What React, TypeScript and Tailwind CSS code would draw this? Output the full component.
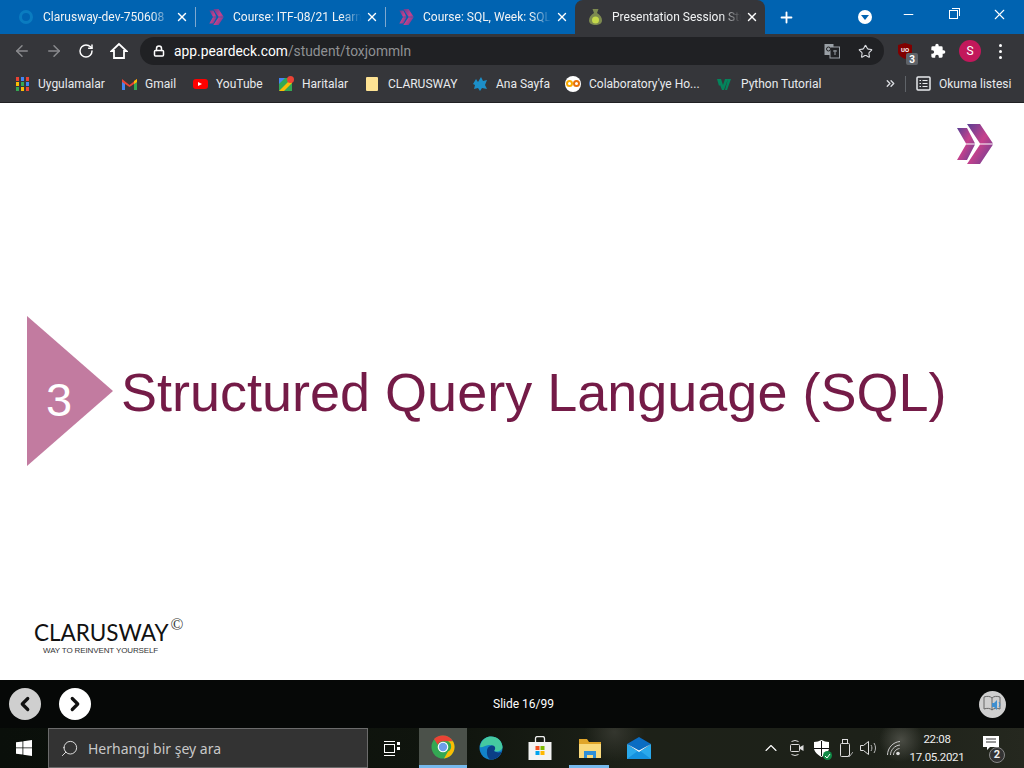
import { ArrowLeft, ArrowRight, RotateCw, Star, X, Plus, Minus, Lock, Search, ChevronUp, ChevronsRight, ChevronLeft, ChevronRight } from 'lucide-react'

const font = '[font-family:Roboto,"Open_Sans",sans-serif]'

function ClaruswayMark({ width = 16, height = 16 }: { width?: number; height?: number }) {
  return (
    <svg width={width} height={height} viewBox="0 0 36 40">
      <defs>
        <linearGradient id="cw" x1="0" y1="0" x2="1" y2="1">
          <stop offset="0" stopColor="#5b3f94" />
          <stop offset="0.5" stopColor="#c6418c" />
          <stop offset="1" stopColor="#5b3f94" />
        </linearGradient>
      </defs>
      <path d="M0 4h10l8 15.500H9z M9 20.500h9L10 36H0z" fill="url(#cw)" />
      <path d="M10 0h13l13 19.500H23z M23 20.500h13L23 40H10z" fill="url(#cw)" />
    </svg>
  )
}

function Tab({ title, icon, active }: { title: string; icon: React.ReactNode; active?: boolean }) {
  return (
    <div className={`flex h-[34px] shrink-0 items-center pl-[12px] pr-[6px] ${active ? 'w-[190px] rounded-t-lg bg-[#35363a]' : 'w-[189px]'}`}>
      <div className="flex h-4 w-4 shrink-0 items-center justify-center">{icon}</div>
      <span className="ml-[9px] min-w-0 flex-1 overflow-hidden whitespace-nowrap text-[12px] text-[#f1f3f4] [mask-image:linear-gradient(to_right,black_85%,transparent)]">
        {title}
      </span>
      <X size={14} strokeWidth={2.4} className="ml-[4px] shrink-0 text-white" />
    </div>
  )
}

function Bookmark({ icon, label, className }: { icon: React.ReactNode; label: string; className: string }) {
  return (
    <div className={`flex items-center gap-[8px] text-[12px] text-[#e8eaed] ${className}`}>
      <div className="flex h-4 w-4 shrink-0 items-center justify-center">{icon}</div>
      <span className="whitespace-nowrap">{label}</span>
    </div>
  )
}

function AppsIcon() {
  const colors = ['#ea4335', '#4285f4', '#ea4335', '#fbbc04', '#34a853', '#4285f4', '#34a853', '#fbbc04', '#ea4335']
  return (
    <div className="grid grid-cols-3 gap-x-[2px] gap-y-[1px]">
      {colors.map((c, i) => (
        <div key={i} className="h-[4px] w-[3px]" style={{ background: c }} />
      ))}
    </div>
  )
}

function ChromeIcon() {
  return (
    <svg width="24" height="24" viewBox="0 0 24 24">
      <circle cx="12" cy="12" r="11.500" fill="#34a853" />
      <path d="M12 .5a11.500 11.500 0 0 1 10 5.800H12a5.700 5.700 0 0 0-5.200 3.400L3 4A11.500 11.500 0 0 1 12 .5z" fill="#ea4335" />
      <path d="M22 6.300a11.500 11.500 0 0 1-9 17.200l4-7a5.700 5.700 0 0 0 0-10.200z" fill="#fbbc04" />
      <circle cx="12" cy="12" r="5.300" fill="#fff" />
      <circle cx="12" cy="12" r="4.200" fill="#6d9eeb" />
    </svg>
  )
}

function EdgeIcon() {
  return (
    <svg width="24" height="24" viewBox="0 0 24 24">
      <circle cx="12" cy="12" r="11.500" fill="#1283c9" />
      <path d="M1 11C2 3 8 .5 12 .5c6 0 11 4 11.500 10.500.2 3.500-5 5.500-8.500 4 2-3-1-6.500-5-6C6 9.500 3 12 1 11z" fill="#45c9a0" />
      <path d="M8 15c0-4 4-6.500 7-5 2 1.500 1 4 0 5 3 2 5.500 1.500 8 .5-2 5-6 8-11 8-3-.5-4.500-5-4-8.500z" fill="#0b3f86" />
    </svg>
  )
}

function StoreIcon() {
  return (
    <svg width="24" height="24" viewBox="0 0 24 24">
      <path d="M7.500 7V2.500C7.500 1 8.500.5 9.500.5h5c1 0 2 .5 2 2V7" fill="none" stroke="#eee" strokeWidth="1.300" />
      <rect x="0.500" y="6" width="23" height="18" fill="#f3f3f3" />
      <rect x="7.500" y="10" width="4" height="4" fill="#f25022" />
      <rect x="12.500" y="10" width="4" height="4" fill="#7fba00" />
      <rect x="7.500" y="15" width="4" height="4" fill="#00a4ef" />
      <rect x="12.500" y="15" width="4" height="4" fill="#ffb900" />
    </svg>
  )
}

function ExplorerIcon() {
  return (
    <svg width="22" height="19" viewBox="0 0 22 19">
      <path d="M0 0h8l2 3h12v16H0z" fill="#e0a52a" />
      <path d="M0 5h22v14H0z" fill="#f9d97c" />
      <path d="M5 19v-7h12v7h-3v-3H8v3z" fill="#2f8fd8" />
    </svg>
  )
}

function MailIcon() {
  return (
    <svg width="24" height="22" viewBox="0 0 24 22">
      <path d="M0 7 12 0l12 7-12 8z" fill="#0a6cc2" />
      <path d="M0 7l12 8 12-8v15H0z" fill="#2aa9ec" />
      <path d="M0 22l12-9 12 9z" fill="#1591de" />
      <path d="M0 7l12 8 12-8-12 6.500z" fill="#fff" />
    </svg>
  )
}

export default function App() {
  return (
    <div className={`flex h-[768px] w-[1024px] flex-col overflow-hidden bg-white ${font}`}>
      {/* tab strip */}
      <div className="flex h-[34px] items-center bg-[#0063b1] pl-[6px]">
        <Tab title="Clarusway-dev-750608" icon={<div className="h-[14px] w-[14px] rounded-full border-[3px] border-[#0a7cc0]" />} />
        <div className="h-5 w-px bg-[#7fa8cf]" />
        <Tab title="Course: ITF-08/21 Learn" icon={<ClaruswayMark width={15} height={16} />} />
        <div className="h-5 w-px bg-[#7fa8cf]" />
        <Tab title="Course: SQL, Week: SQL" icon={<ClaruswayMark width={15} height={16} />} />
        <Tab
          active
          title="Presentation Session Stu"
          icon={
            <svg width="13" height="16" viewBox="0 0 13 16">
              <path d="M3.500 0h6L8 4c3 1.500 5 4.500 5 7.500 0 3-3 4.500-6.500 4.500S0 14.500 0 11.500C0 8.500 2 5.500 5 4z" fill="#7d8a50" />
              <circle cx="6.500" cy="11" r="3.500" fill="#c5d94a" />
            </svg>
          }
        />
        <Plus size={17} strokeWidth={2.6} className="ml-[13px] text-white" />
        <div className="ml-[63px] flex h-[14px] w-[14px] items-center justify-center rounded-full bg-white">
          <div className="h-0 w-0 border-x-[4px] border-t-[5px] border-x-transparent border-t-[#0063b1]" />
        </div>
        <Minus size={15} strokeWidth={1.700} className="mb-[6px] ml-[29px] text-white" />
        <div className="relative mb-[6px] ml-[33px] h-[9px] w-[9px] border border-white">
          <div className="absolute -right-[3px] -top-[3px] h-[8px] w-[8px] border-r border-t border-white" />
        </div>
        <X size={17} strokeWidth={1.500} className="mb-[6px] ml-[33px] text-white" />
      </div>

      {/* toolbar */}
      <div className="flex h-[34px] items-center bg-[#35363a] pl-[13px]">
        <ArrowLeft size={18} className="text-[#8a8b8e]" />
        <ArrowRight size={18} className="ml-[14px] text-[#8a8b8e]" />
        <RotateCw size={16} strokeWidth={2.2} className="ml-[15px] text-white" />
        <svg width="18" height="18" viewBox="0 0 18 18" className="ml-[16px]">
          <path d="M9 2 1.500 9H4v7h10V9h2.500z" fill="none" stroke="#fff" strokeWidth="1.800" strokeLinejoin="miter" />
        </svg>
        <div className="ml-[12px] flex h-[28px] w-[744px] items-center rounded-full bg-[#202124] pl-[13px] pr-[11px]">
          <Lock size={12} strokeWidth={3} className="text-white" />
          <span className="ml-[9px] text-[13.800px] text-white">app.peardeck.com</span>
          <span className="text-[13.800px] text-[#8f9194]">/student/toxjommln</span>
          <svg width="16" height="16" viewBox="0 0 16 16" className="ml-auto">
            <rect x="0.500" y="1" width="9" height="11" fill="#9aa0a6" />
            <rect x="6" y="4" width="9.500" height="11" fill="#202124" stroke="#9aa0a6" />
            <circle cx="4.500" cy="6" r="2" fill="none" stroke="#202124" />
            <path d="M9 8h4M11 7v5" stroke="#9aa0a6" />
          </svg>
          <Star size={15} strokeWidth={1.800} className="ml-[18px] text-[#dadce0]" />
        </div>
        <div className="relative ml-[14px] h-4 w-4">
          <svg width="14" height="16" viewBox="0 0 14 16">
            <path d="M0 2 7 0l7 2v7c0 3-3 5-7 7-4-2-7-4-7-7z" fill="#800000" />
          </svg>
          <span className="absolute left-0 top-[3px] w-[14px] text-center text-[6px] font-bold leading-[7px] text-white">UO</span>
          <span className="absolute -bottom-[6px] left-[8px] flex h-[12px] w-[12px] items-center justify-center rounded-[2px] bg-[#5f6368] text-[10px] font-bold text-white">3</span>
        </div>
        <svg width="16" height="16" viewBox="0 0 24 24" className="ml-[16px]">
          <path d="M20.500 11H19V7a2 2 0 0 0-2-2h-4V3.500a2.500 2.500 0 0 0-5 0V5H4a2 2 0 0 0-2 2v3.800h1.500a2.700 2.700 0 0 1 0 5.400H2V20a2 2 0 0 0 2 2h3.800v-1.500a2.700 2.700 0 0 1 5.400 0V22H17a2 2 0 0 0 2-2v-4h1.500a2.500 2.500 0 0 0 0-5z" fill="#fff" />
        </svg>
        <div className="ml-[13px] flex h-[22px] w-[22px] items-center justify-center rounded-full bg-[#c2185b] text-[12px] text-white">S</div>
        <div className="ml-[18px] flex flex-col gap-[3px]">
          <div className="h-[3px] w-[3px] rounded-full bg-white" />
          <div className="h-[3px] w-[3px] rounded-full bg-white" />
          <div className="h-[3px] w-[3px] rounded-full bg-white" />
        </div>
      </div>

      {/* bookmarks */}
      <div className="flex h-[35px] items-center border-b border-[#202124] bg-[#35363a] pb-[3px] pl-[14px]">
        <Bookmark className="w-[107px]" icon={<AppsIcon />} label="Uygulamalar" />
        <Bookmark className="w-[71px]" icon={
          <svg width="15" height="12" viewBox="0 0 15 12">
            <path d="M0 2v10h3V5z" fill="#4285f4" />
            <path d="M15 2v10h-3V5z" fill="#34a853" />
            <path d="M0 1l7.500 6L15 1v3L7.500 9 0 4z" fill="#ea4335" />
            <path d="M12 3l3-2v3l-3 2z" fill="#fbbc04" />
          </svg>
        } label="Gmail" />
        <Bookmark className="w-[86px]" icon={
          <div className="flex h-[10px] w-[15px] items-center justify-center rounded-[3px] bg-[#f00]">
            <div className="h-0 w-0 border-y-[2.500px] border-l-[4px] border-y-transparent border-l-white" />
          </div>
        } label="YouTube" />
        <Bookmark className="w-[86px]" icon={
          <svg width="15" height="15" viewBox="0 0 15 15">
            <rect y="2" width="13" height="13" fill="#34a853" />
            <path d="M0 15 13 2v5L5 15z" fill="#fbbc04" />
            <path d="M0 2h6L0 8z" fill="#4285f4" />
            <circle cx="11.500" cy="3.500" r="3.500" fill="#ea4335" />
          </svg>
        } label="Haritalar" />
        <Bookmark className="w-[108px]" icon={<div className="h-[14px] w-[12px] rounded-[1px] bg-[#fde293]" />} label="CLARUSWAY" />
        <Bookmark className="w-[93px]" icon={
          <svg width="16" height="16" viewBox="0 0 16 16">
            <path d="M1 8l3-5 2 3 3-5 2 4 4-1-2 5 2 4-5-1-2 3-2-3-4 1 1-4z" fill="#1c8fc9" />
          </svg>
        } label="Ana Sayfa" />
        <Bookmark className="w-[152px]" icon={
          <div className="flex h-4 w-4 items-center justify-center rounded-full bg-white">
            <div className="flex">
              <div className="h-[7px] w-[7px] rounded-full border-2 border-[#f9ab00]" />
              <div className="h-[7px] w-[7px] rounded-full border-2 border-[#e8710a]" />
            </div>
          </div>
        } label="Colaboratory'ye Ho..." />
        <Bookmark className="w-[167px]" icon={
          <svg width="16" height="12" viewBox="0 0 16 12">
            <path d="M0 1h4l2 6 2-6h3L7 12H5L3 7l-1 1z M8 12l3-11h3l-4 11z" fill="#04845c" />
          </svg>
        } label="Python Tutorial" />
        <ChevronsRight size={13} strokeWidth={2.500} className="text-[#dadce0]" />
        <div className="ml-[8px] h-[16px] w-px bg-[#5f6368]" />
        <svg width="15" height="15" viewBox="0 0 15 15" className="ml-[10px]">
          <rect x="1" y="1" width="13" height="13" rx="1" fill="none" stroke="#e8eaed" strokeWidth="1.500" />
          <path d="M3.500 4.500h1.500M6.500 4.500h5M3.500 7.500h1.500M6.500 7.500h5M3.500 10.500h1.500M6.500 10.500h5" stroke="#e8eaed" />
        </svg>
        <span className="ml-[8px] whitespace-nowrap text-[12px] text-[#e8eaed]">Okuma listesi</span>
      </div>

      {/* slide */}
      <div className="flex h-[577px] flex-col bg-white [font-family:'Liberation_Sans',Arial,sans-serif]">
        <div className="flex justify-end pr-[31px] pt-[21px]">
          <ClaruswayMark width={36} height={40} />
        </div>
        <div className="mt-[152px] flex items-center pl-[27px]">
          <div className="relative h-[150px] w-[86px] shrink-0">
            <div className="h-0 w-0 border-y-[75px] border-l-[86px] border-y-transparent border-l-[#c27ba0]" />
            <span className="absolute left-[19px] top-[55px] text-[47px] leading-[58px] text-white">3</span>
          </div>
          <h1 className="ml-[8px] mt-[2px] whitespace-nowrap text-[54px] leading-[64px] text-[#741b47]">Structured Query Language (SQL)</h1>
        </div>
        <div className="mt-auto pb-[24px] pl-[34px]">
          <div className="flex items-start">
            <span className="text-[22.500px] leading-[26px] [font-family:Lato,sans-serif] text-[#111]">CLARUSWAY</span>
            <span className="ml-[2px] -mt-[2px] font-['Liberation_Serif'] text-[17px] leading-[14px] text-[#333]">©</span>
          </div>
          <div className="ml-[9px] text-[8px] leading-[10px] tracking-[-0.12px] text-[#333]">WAY TO REINVENT YOURSELF</div>
        </div>
      </div>

      {/* presenter bar */}
      <div className="flex h-[48px] items-center bg-[#060807] pl-[9px] pr-[18px]">
        <div className="flex h-8 w-8 items-center justify-center rounded-full bg-[#cfcfcf]">
          <ChevronLeft size={22} strokeWidth={3.500} className="text-[#111]" />
        </div>
        <div className="ml-[18px] flex h-8 w-8 items-center justify-center rounded-full bg-white">
          <ChevronRight size={22} strokeWidth={3.500} className="text-[#111]" />
        </div>
        <span className="ml-[402px] text-[12px] text-white">Slide 16/99</span>
        <div className="ml-auto flex h-[27px] w-[27px] items-center justify-center rounded-full bg-[#cfcfcf]">
          <svg width="20" height="18" viewBox="0 0 20 18">
            <path d="M1 2c3-1 6-1 8 1 2-2 5-2 8-1v12c-3-1-6-1-8 1-2-2-5-2-8-1zM9 3v12" fill="none" stroke="#666" />
            <path d="M9 8h2l3-3v10l-3-3H9z" fill="#3f8fd0" />
            <path d="M16 7c1 1 1 4 0 5" stroke="#3f8fd0" fill="none" />
          </svg>
        </div>
      </div>

      {/* taskbar */}
      <div className="flex h-[40px] items-center bg-[radial-gradient(circle_at_88%_30%,#4a4c44_0,transparent_22px),radial-gradient(circle_at_60%_10%,#34362e_0,transparent_30px),linear-gradient(90deg,#0a0f0a,#10150e_45%,#1d2118_62%,#1d2119_85%,#25281f)] text-white">
        <div className="flex w-[48px] justify-center">
          <svg width="16" height="16" viewBox="0 0 16 16">
            <path d="M0 2.300 6.500 1.400V7.500H0zM7.300 1.300 16 0v7.500H7.300zM0 8.300H6.500v6.300L0 13.700zM7.300 8.300H16V16l-8.700-1.300z" fill="#fff" />
          </svg>
        </div>
        <div className="flex h-[40px] w-[320px] items-center border border-[#6b6b6b] bg-[#333] pl-[11px]">
          <Search size={19} strokeWidth={1.200} className="-scale-x-100 text-[#e5e5e5]" />
          <span className="ml-[9px] text-[14px] text-[#c8c8c8] [font-family:'Noto_Sans',sans-serif]">Herhangi bir şey ara</span>
        </div>
        <div className="flex w-[51px] justify-center pr-[2px]">
          <svg width="17" height="15" viewBox="0 0 17 15">
            <path d="M0 .500h11M0 14.500h11" stroke="#fff" />
            <rect x=".500" y="3.500" width="10" height="8" fill="none" stroke="#fff" />
            <rect x="13" y="1" width="3" height="3" fill="#fff" />
            <rect x="13" y="6" width="3" height="3" fill="#fff" />
          </svg>
        </div>
        <div className="flex h-[40px] w-[48px] items-center justify-center border-b-[3px] border-[#76b9ed] bg-[#4b514a]">
          <ChromeIcon />
        </div>
        <div className="flex h-[40px] w-[48px] items-center justify-center"><EdgeIcon /></div>
        <div className="flex h-[40px] w-[50px] items-center justify-center"><StoreIcon /></div>
        <div className="relative flex h-[40px] w-[49px] items-center justify-center">
          <ExplorerIcon />
          <div className="absolute bottom-0 left-[4px] h-[3px] w-[40px] bg-[#76b9ed]" />
        </div>
        <div className="flex h-[40px] w-[49px] items-center justify-center"><MailIcon /></div>
        <ChevronUp size={20} strokeWidth={1.300} className="ml-[98px]" />
        <svg width="14" height="18" viewBox="0 0 14 18" className="ml-[9px]">
          <path d="M1.500 2.500a7 7 0 0 1 7 0M1.500 15.500a7 7 0 0 0 7 0" fill="none" stroke="#ddd" />
          <rect x="0.500" y="5.500" width="9" height="7" rx="1" fill="none" stroke="#ddd" />
          <path d="M10 8l3.500-2v6L10 10z" fill="#ddd" />
        </svg>
        <div className="relative ml-[10px] h-4 w-4">
          <svg width="15" height="17" viewBox="0 0 15 17">
            <path d="M0 2c3 0 5-1 7.500-2C10 1 12 2 15 2v6c0 4-4 7-7.500 9C4 15 0 12 0 8z" fill="#fff" />
            <path d="M7 1v7H0v1h7v7h1V9h7V8H8V1z" fill="#111" />
          </svg>
          <div className="absolute -bottom-[4px] -right-[2px] flex h-[9px] w-[9px] items-center justify-center rounded-full bg-[#0f8a46]">
            <svg width="7" height="6" viewBox="0 0 7 6"><path d="M1 3l2 2 3-4" fill="none" stroke="#fff" /></svg>
          </div>
        </div>
        <svg width="13" height="18" viewBox="0 0 13 18" className="ml-[10px]">
          <rect x="2.500" y="0.500" width="5" height="4" fill="none" stroke="#ddd" />
          <rect x="0.500" y="4.500" width="9" height="13" rx="1" fill="none" stroke="#ddd" />
          <path d="M8 16l1.500 1.500L13 13" fill="none" stroke="#aaa" />
        </svg>
        <svg width="18" height="16" viewBox="0 0 18 16" className="ml-[7px]">
          <path d="M.5 5.500h3l5-4v13l-5-4h-3z" fill="none" stroke="#ddd" />
          <path d="M11 5c1.200 1.800 1.200 4.200 0 6M14 3c2 3 2 7 0 10" fill="none" stroke="#bbb" />
        </svg>
        <svg width="15" height="15" viewBox="0 0 15 15" className="ml-[9px]">
          <path d="M.5 14C.5 7 6 1 13 .5M3.500 14c0-5 4-9.500 9.500-10M6.500 14c0-3 2.500-6 6-6.500" fill="none" stroke="#ccc" />
          <circle cx="11" cy="12.500" r="1.800" fill="#ddd" />
        </svg>
        <div className="ml-[-1px] flex w-[72px] flex-col items-center text-[11.500px] leading-[18px] tracking-[-0.3px] text-[#eee]">
          <span>22:08</span>
          <span>17.05.2021</span>
        </div>
        <div className="relative ml-[8px] h-[24px] w-[26px]">
          <svg width="16" height="15" viewBox="0 0 16 15" className="ml-[2px]">
            <path d="M0 0h16v11H7l-3 3v-3H0z" fill="#fff" />
            <path d="M3 3h10M3 6h10" stroke="#333" />
          </svg>
          <span className="absolute -bottom-[3px] left-[8px] flex h-[16px] w-[16px] items-center justify-center rounded-full border border-[#888] bg-[#333] text-[11px] font-bold text-[#eee]">2</span>
        </div>
      </div>
    </div>
  )
}
